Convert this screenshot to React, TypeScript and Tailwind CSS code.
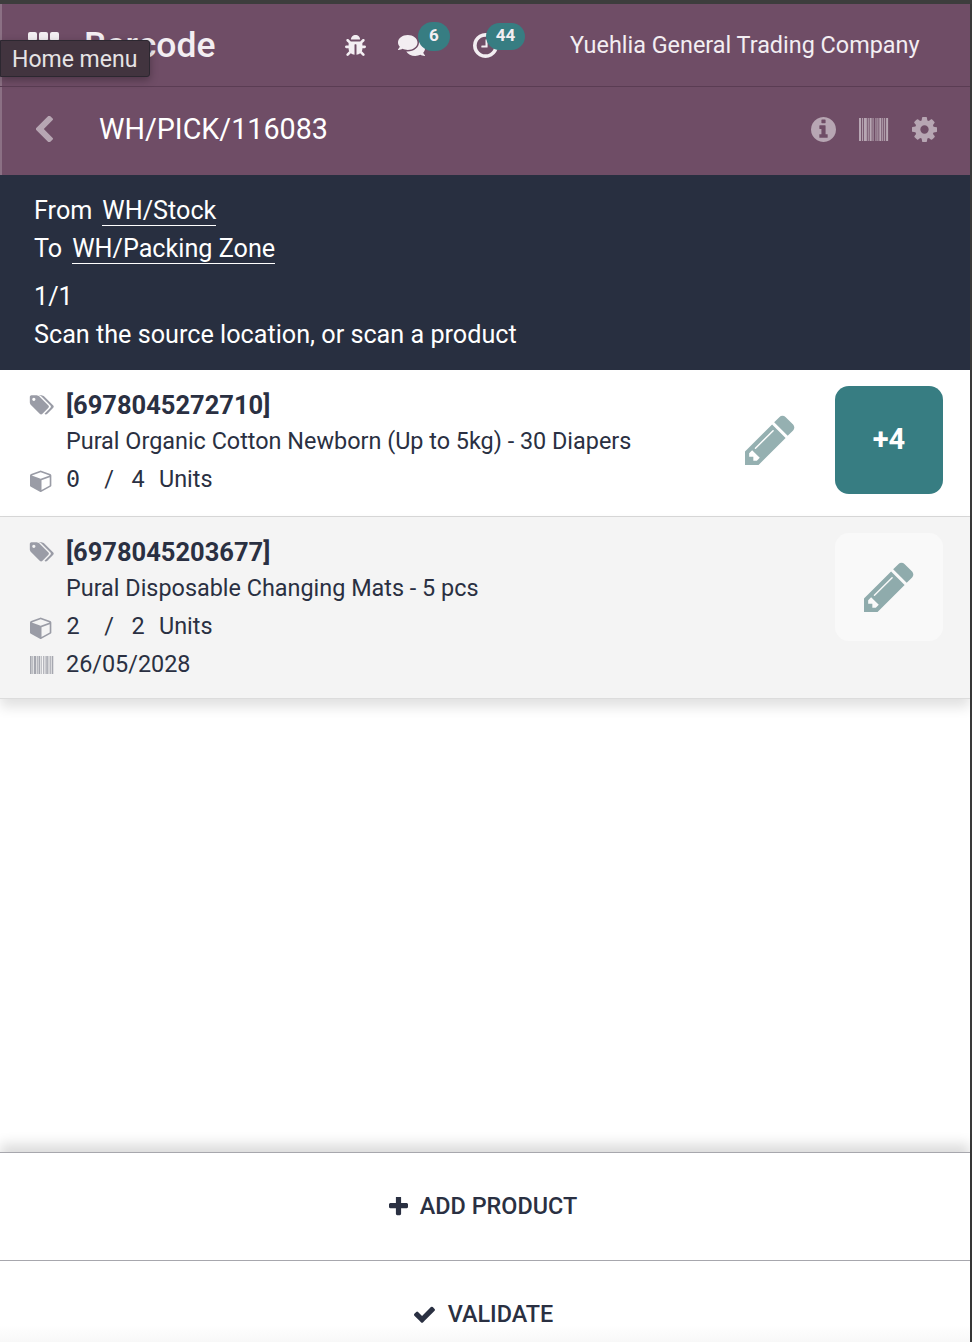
import { FaBug, FaComments } from 'react-icons/fa';

const paths = {
  pencil:
    'M491 1536l91-91-235-235-91 91v107h128v128h107zm523-928q0-22-22-22-10 0-17 7l-542 542q-7 7-7 17 0 22 22 22 10 0 17-7l542-542q7-7 7-17zm-54-192l416 416-832 832h-416v-416zm683 96q0 53-37 90l-166 166-416-416 166-165q36-38 90-38 53 0 91 38l235 234q37 39 37 91z',
  cog: 'M1152 896q0-106-75-181t-181-75-181 75-75 181 75 181 181 75 181-75 75-181zm512-109v222q0 12-8 23t-20 13l-185 28q-19 54-39 91 35 50 107 138 10 12 10 25t-9 23q-27 37-99 108t-94 71q-12 0-26-9l-138-108q-44 23-91 38-16 136-29 186-7 28-36 28h-222q-14 0-24.5-8.5t-11.5-21.5l-28-184q-49-16-90-37l-141 107q-10 9-25 9-14 0-25-11-126-114-165-168-7-10-7-23 0-12 8-23 15-21 51-66.5t54-70.5q-27-50-41-99l-183-27q-13-2-21-12.5t-8-23.5v-222q0-12 8-23t19-13l186-28q14-46 39-92-40-57-107-138-10-12-10-24 0-10 9-23 26-36 98.5-107.5t94.5-71.5q13 0 26 10l138 107q44-23 91-38 16-136 29-186 7-28 36-28h222q14 0 24.5 8.5t11.5 21.5l28 184q49 16 90 37l142-107q9-9 24-9 13 0 25 10 129 119 165 170 7 8 7 22 0 12-8 23-15 21-51 66.5t-54 70.5q26 50 41 98l183 28q13 2 21 12.5t8 23.5z',
  info: 'M1152 1376v-160q0-14-9-23t-23-9h-96v-512q0-14-9-23t-23-9h-320q-14 0-23 9t-9 23v160q0 14 9 23t23 9h96v320h-96q-14 0-23 9t-9 23v160q0 14 9 23t23 9h448q14 0 23-9t9-23zm-128-896v-160q0-14-9-23t-23-9h-192q-14 0-23 9t-9 23v160q0 14 9 23t23 9h192q14 0 23-9t9-23zm640 416q0 209-103 385.5t-279.5 279.5-385.5 103-385.5-103-279.5-279.5-103-385.5 103-385.5 279.5-279.5 385.5-103 385.5 103 279.5 279.5 103 385.5z',
  cube: 'M896 1629l640-349v-636l-640 233v752zm-64-865l698-254-698-254-698 254zm832-252v768q0 35-18 65t-49 47l-704 384q-28 16-61 16t-61-16l-704-384q-31-17-49-47t-18-65v-768q0-40 23-73t61-50l704-256q22-8 44-8t44 8l704 256q38 17 61 50t23 73z',
  tags: 'M512 448q0-53-37.5-90.5t-90.5-37.5-90.5 37.5-37.5 90.5 37.5 90.5 90.5 37.5 90.5-37.5 37.5-90.5zm1067 576q0 53-37 90l-491 492q-39 37-91 37-53 0-90-37l-715-716q-38-37-64.5-101t-26.5-117v-416q0-52 38-90t90-38h416q53 0 117 26.5t102 64.5l715 714q37 39 37 91zm384 0q0 53-37 90l-491 492q-39 37-91 37-36 0-59-14t-53-45l470-470q37-37 37-90 0-52-37-91l-715-714q-38-38-102-64.5t-117-26.5h224q53 0 117 26.5t102 64.5l715 714q37 39 37 91z',
  chevron:
    'M1427 301l-531 531 531 531q19 19 19 45t-19 45l-166 166q-19 19-45 19t-45-19l-742-742q-19-19-19-45t19-45l742-742q19-19 45-19t45 19l166 166q19 19 19 45t-19 45z',
  clock:
    'M1024 544v448q0 14-9 23t-23 9h-320q-14 0-23-9t-9-23v-64q0-14 9-23t23-9h224v-352q0-14 9-23t23-9h64q14 0 23 9t9 23zm416 352q0-148-73-273t-198-198-273-73-273 73-198 198-73 273 73 273 198 198 273 73 273-73 198-198 73-273zm224 0q0 209-103 385.5t-279.5 279.5-385.5 103-385.5-103-279.5-279.5-103-385.5 103-385.5 279.5-279.5 385.5-103 385.5 103 279.5 279.5 103 385.5z',
  plus: 'M1600 736v192q0 40-28 68t-68 28h-416v416q0 40-28 68t-68 28h-192q-40 0-68-28t-28-68v-416h-416q-40 0-68-28t-28-68v-192q0-40 28-68t68-28h416v-416q0-40 28-68t68-28h192q40 0 68 28t28 68v416h416q40 0 68 28t28 68z',
  check:
    'M1671 566q0 40-28 68l-724 724-136 136q-28 28-68 28t-68-28l-136-136-362-362q-28-28-28-68t28-68l136-136q28-28 68-28t68 28l294 295 656-657q28-28 68-28t68 28l136 136q28 28 28 68z',
};

const barWidths = [2, 1, 1, 1, 3, 1, 1, 1, 2, 1, 1, 2, 1, 1, 1, 1, 2, 1, 1, 1, 1, 1, 2];

function Glyph({ d, box, className }: { d: string; box: string; className: string }) {
  return (
    <svg viewBox={box} fill="currentColor" className={className}>
      <path d={d} />
    </svg>
  );
}

function Bars({ className }: { className: string }) {
  let x = 0;
  return (
    <svg viewBox="0 0 30 23" fill="currentColor" preserveAspectRatio="none" className={className}>
      {barWidths.map((w, i) => {
        const bar = i % 2 === 0 ? <rect key={i} x={x} y={0} width={w} height={23} /> : null;
        x += w * (30 / 31);
        return bar;
      })}
    </svg>
  );
}

function Badge({ children, className }: { children: string; className: string }) {
  return (
    <span className={`absolute flex items-center justify-center rounded-full bg-[#377d82] text-[17px] font-bold text-[#f3eef2] ${className}`}>
      {children}
    </span>
  );
}

function QtyRow({ done, todo, mono }: { done: string; todo: string; mono?: boolean }) {
  return (
    <div className="mt-[11px] flex h-[28px] items-center">
      <Glyph d={paths.cube} box="0 0 1792 1792" className="mr-[13px] ml-[30px] h-[23px] w-[23px] text-[#9a9ca6]" />
      <span className={`w-[14px] text-center ${mono ? "font-['DejaVu_Sans_Mono'] text-[23.4px]" : ''}`}>{done}</span>
      <span className="ml-[24px] w-[10px] text-center">/</span>
      <span className="ml-[17px] w-[14px] text-center">{todo}</span>
      <span className="ml-[14px]">Units</span>
    </div>
  );
}

function ProductHead({ code, name }: { code: string; name: string }) {
  return (
    <>
      <div className="flex h-[28px] items-center">
        <Glyph d={paths.tags} box="0 0 1984 1792" className="mr-[12px] ml-[29px] h-[24px] w-[25px] text-[#9a9ca6]" />
        <span className="text-[25.5px] font-bold">{code}</span>
      </div>
      <div className="mt-[8px] h-[28px] pl-[66px] leading-[28px]">{name}</div>
    </>
  );
}

export default function App() {
  return (
    <div className="flex h-[1342px] w-[972px] flex-col overflow-hidden bg-white font-['Roboto',sans-serif] text-[23.4px] text-[#2a3042]">
      <div className="h-[4px] shrink-0 bg-[#3d3d3d]" />
      <div className="flex min-h-0 flex-1 border-r-2 border-[#3a3a3a]">
        <div className="flex min-w-0 flex-1 flex-col">
          <header className="relative flex h-[83px] shrink-0 items-center border-b border-[#5a3c53] bg-[#6f4d66] text-[#f3eef2] shadow-[inset_2px_0_0_rgba(255,255,255,0.2)]">
            <div className="mt-[5px] ml-[28px] grid grid-cols-3 gap-[2px]">
              {[0, 1, 2, 3, 4, 5, 6, 7, 8].map((i) => (
                <span key={i} className="h-[9px] w-[9px] rounded-[2px] bg-[#f3eef2]" />
              ))}
            </div>
            <span className="mt-[2px] ml-[25px] w-[261px] text-[35.5px] leading-none font-medium">Barcode</span>
            <FaBug className="h-[21px] w-[21px]" />
            <div className="relative ml-[32px]">
              <FaComments className="h-[27px] w-[27px]" />
              <Badge className="top-[-10px] left-[20px] h-[29px] w-[32px]">6</Badge>
            </div>
            <div className="relative ml-[48px]">
              <Glyph d={paths.clock} box="128 128 1536 1536" className="h-[25px] w-[25px]" />
              <Badge className="top-[-10px] left-[13px] h-[27px] w-[39px]">44</Badge>
            </div>
            <span className="ml-[72px] pt-[2px]">Yuehlia General Trading Company</span>
            <div className="absolute top-[36px] left-0 flex h-[37px] w-[150px] items-center rounded-r-[3px] border border-[#2c2730] bg-[#42343f] pt-[3px] pl-[11px] text-[23px] text-[#e6e3e5] shadow-[0_3px_8px_rgba(0,0,0,0.3)]">
              Home menu
            </div>
          </header>

          <div className="flex h-[88px] shrink-0 items-center bg-[#6f4d66] pb-[3px] text-white shadow-[inset_2px_0_0_rgba(255,255,255,0.2)]">
            <Glyph d={paths.chevron} box="429 64 1017 1536" className="mt-[-2px] ml-[36px] h-[26px] w-[17px] text-white/50" />
            <span className="ml-[46px] flex-1 text-[28.7px]">WH/PICK/116083</span>
            <Glyph d={paths.info} box="128 128 1536 1536" className="h-[25px] w-[25px] text-white/50" />
            <Bars className="ml-[23px] h-[23px] w-[30px] text-white/50" />
            <Glyph d={paths.cog} box="128 128 1536 1536" className="mr-[33px] ml-[23px] h-[25px] w-[25px] text-white/50" />
          </div>

          <div className="h-[195px] shrink-0 bg-[#282f40] pt-[17px] pl-[34px] text-[25.2px] text-white">
            <div className="flex h-[38px] items-center">
              From
              <span className="ml-[10px] border-b border-white leading-[28px]">WH/Stock</span>
            </div>
            <div className="flex h-[38px] items-center">
              To
              <span className="ml-[10px] border-b border-white leading-[28px]">WH/Packing Zone</span>
            </div>
            <div className="mt-[10px] h-[38px] leading-[38px]">1/1</div>
            <div className="h-[38px] leading-[38px]">Scan the source location, or scan a product</div>
          </div>

          <div className="min-h-0 flex-1">
            <div className="relative h-[147px] border-b border-[#d8d8d8] pt-[21px]">
              <ProductHead code="[6978045272710]" name="Pural Organic Cotton Newborn (Up to 5kg) - 30 Diapers" />
              <QtyRow done="0" todo="4" mono />
              <Glyph d={paths.pencil} box="128 128 1536 1536" className="absolute top-[45px] left-[745px] h-[50px] w-[50px] text-[#95b0b1]" />
              <button className="absolute top-[16px] left-[835px] flex h-[108px] w-[108px] items-center justify-center rounded-[14px] bg-[#377d82] text-[29px] font-bold text-white">
                +4
              </button>
            </div>
            <div className="relative h-[182px] border-b border-[#dcdcdc] bg-[#f4f4f4] pt-[21px] shadow-[0_8px_12px_rgba(0,0,0,0.12)]">
              <ProductHead code="[6978045203677]" name="Pural Disposable Changing Mats - 5 pcs" />
              <QtyRow done="2" todo="2" />
              <div className="mt-[10px] flex h-[28px] items-center">
                <Bars className="mr-[12px] ml-[30px] h-[18px] w-[24px] text-[#a5a7af]" />
                26/05/2028
              </div>
              <button className="absolute top-[16px] left-[835px] flex h-[108px] w-[108px] items-center justify-center rounded-[14px] bg-[#f9f9f9]">
                <Glyph d={paths.pencil} box="128 128 1536 1536" className="h-[50px] w-[50px] text-[#8fabac]" />
              </button>
            </div>
          </div>

          <footer className="relative mb-[-26px] shrink-0 bg-white text-[23.4px] font-medium shadow-[0_-8px_12px_rgba(0,0,0,0.14)]">
            <button className="flex h-[108px] w-full items-center justify-center gap-[12px] border-t border-[#a7a7ad] pr-[4px]">
              <Glyph d={paths.plus} box="192 192 1408 1408" className="h-[19px] w-[19px]" />
              ADD PRODUCT
            </button>
            <button className="flex h-[108px] w-full items-center justify-center gap-[13px] border-t border-[#a7a7ad] bg-gradient-to-b from-white from-[60%] to-[#ededed] pr-[3px]">
              <Glyph d={paths.check} box="121 300 1550 1222" className="h-[17px] w-[21px]" />
              VALIDATE
            </button>
          </footer>
        </div>
      </div>
    </div>
  );
}
